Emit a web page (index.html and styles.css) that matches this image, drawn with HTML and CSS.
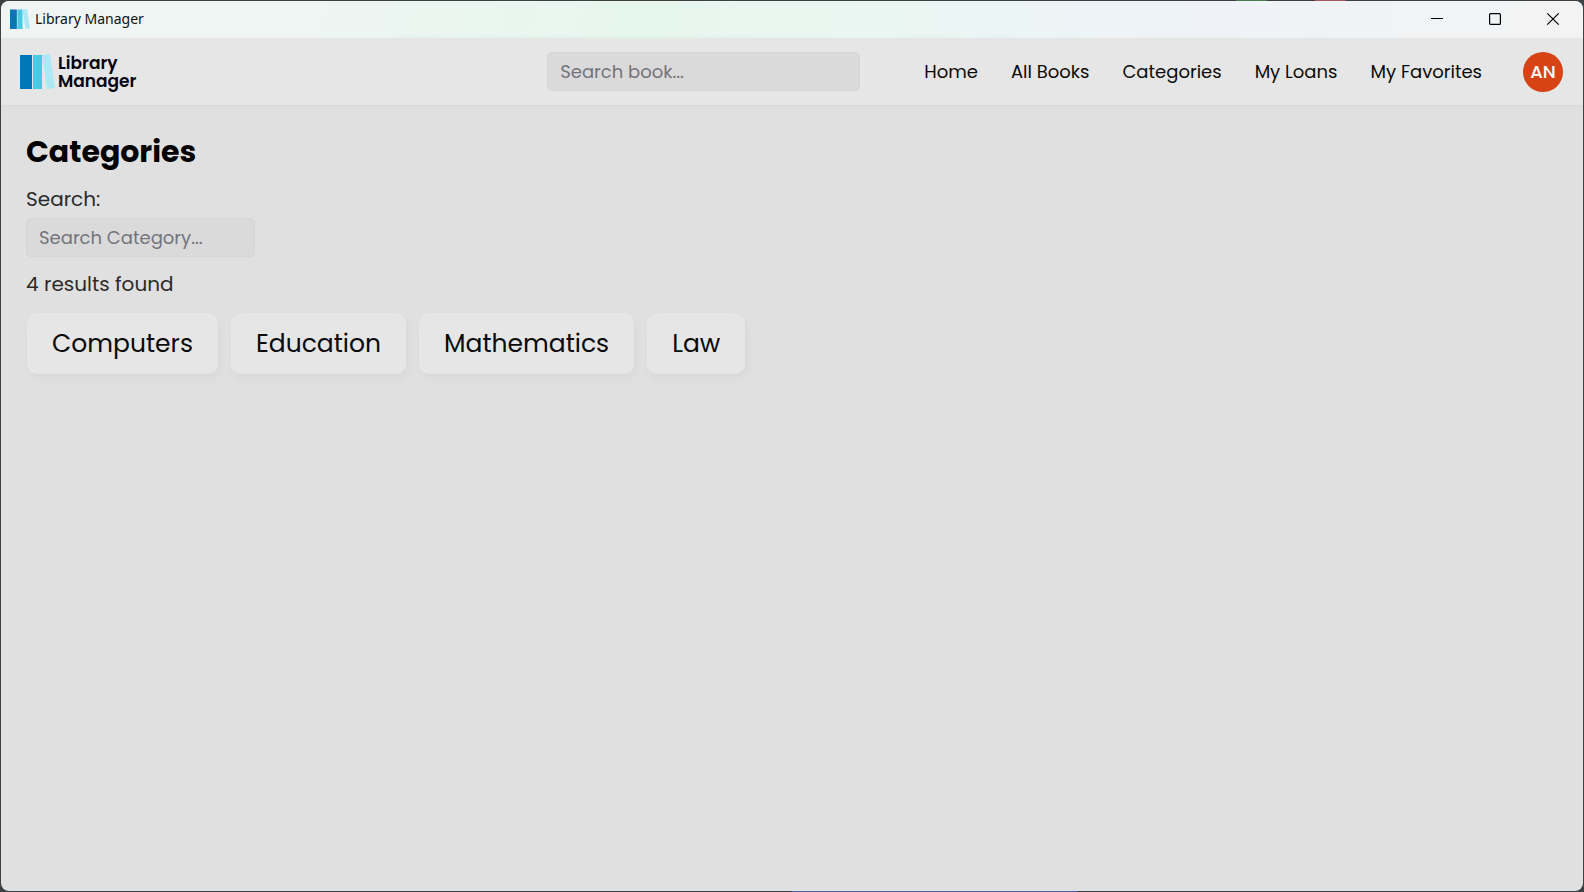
FILE: index.html
```html
<!DOCTYPE html>
<html lang="en">
<head>
<meta charset="utf-8">
<title>Library Manager</title>
<link rel="stylesheet" href="styles.css">
</head>
<body>
<div class="window">
  <div class="titlebar">
    <svg class="app-icon" viewBox="0 0 35 35" aria-hidden="true">
      <path fill="#0077b6" d="M0 1h12v34H0z"/><path fill="#48cae4" d="M13 1h9v34h-9z"/><path fill="#ade8f4" d="M22 1l8-1 5 34-8 1z"/>
    </svg>
    <span class="window-title">Library Manager</span>
    <div class="window-controls">
      <button class="control" aria-label="Minimize"><svg viewBox="0 0 12 12"><path d="M0 5.5h12"/></svg></button>
      <button class="control" aria-label="Maximize"><svg viewBox="0 0 12 12"><rect x=".6" y=".6" width="10.8" height="10.8" rx="1"/></svg></button>
      <button class="control" aria-label="Close"><svg viewBox="0 0 12 12"><path d="M.3.3l11.4 11.4M11.7.3L.3 11.7"/></svg></button>
    </div>
  </div>
  <header class="header">
    <a class="brand" href="#">
      <svg class="brand-icon" viewBox="0 0 35 35" aria-hidden="true">
        <path fill="#0077b6" d="M0 1h12v34H0z"/><path fill="#48cae4" d="M13 1h9v34h-9z"/><path fill="#ade8f4" d="M22 1l8-1 5 34-8 1z"/>
      </svg>
      <span class="brand-name">Library<br>Manager</span>
    </a>
    <input class="field book-search" type="text" placeholder="Search book..." aria-label="Search book">
    <nav class="nav">
      <a href="#">Home</a>
      <a href="#">All Books</a>
      <a href="#">Categories</a>
      <a href="#">My Loans</a>
      <a href="#">My Favorites</a>
    </nav>
    <button class="avatar">AN</button>
  </header>
  <main class="content">
    <h1 class="heading">Categories</h1>
    <label class="label" for="category-search">Search:</label>
    <input class="field category-search" id="category-search" type="text" placeholder="Search Category...">
    <p class="results">4 results found</p>
    <div class="categories">
      <a class="card" href="#">Computers</a>
      <a class="card" href="#">Education</a>
      <a class="card" href="#">Mathematics</a>
      <a class="card" href="#">Law</a>
    </div>
  </main>
</div>
</body>
</html>
```
FILE: styles.css
```css
* { box-sizing: border-box; }

body {
  margin: 0;
  padding: 1px;
  min-height: 100vh;
  display: flex;
  background:
    linear-gradient(90deg, transparent 78%, #4c7a50 78%, #4c7a50 80%, transparent 80%, transparent 83%, #a8595f 83%, #a8595f 85%, transparent 85%) top / 100% 1px no-repeat,
    linear-gradient(90deg, transparent 50%, #4a63a8 50%, #4a63a8 68%, transparent 68%) bottom / 100% 1px no-repeat,
    #3c4043;
  font-family: Poppins, Inter, "Open Sans", sans-serif;
  color: #0a0a0a;
}

a { color: inherit; text-decoration: none; }
button { border: 0; padding: 0; background: none; font-family: inherit; }

.window {
  flex: 1;
  display: flex;
  flex-direction: column;
  overflow: hidden;
  border-radius: 8px;
  background: #e0e0e0;
}

.titlebar {
  display: flex;
  align-items: center;
  height: 37px;
  padding: 0 1px 1px 9px;
  background: linear-gradient(95deg, #f0f5f3 0%, #eef5f2 20%, #e6f7ee 40%, #e9f7f1 52%, #eef3f8 72%, #f3f3f3 100%);
}
.app-icon { width: 20px; height: 20px; }
.window-title {
  margin-left: 5px;
  font: 14px/20px "Noto Sans", sans-serif;
  color: #111;
}
.window-controls { display: flex; margin-left: auto; }
.control {
  display: flex;
  align-items: center;
  justify-content: center;
  width: 58px;
  height: 36px;
}
.control svg { width: 12px; height: 12px; fill: none; stroke: #000; stroke-width: 1.2; overflow: visible; }

.header {
  display: flex;
  align-items: center;
  height: 67px;
  padding: 0 20px 0 19px;
  background: #e6e6e6;
  box-shadow: 0 1px 6px rgba(0, 0, 0, 0.04);
}
.brand { display: flex; align-items: center; gap: 3px; }
.brand-icon { width: 35px; height: 35px; }
.brand-name { font-size: 17px; line-height: 18px; font-weight: 600; color: #03030f; }

.field {
  height: 39px;
  padding: 0 12px;
  border: 1px solid #d5d5d5;
  border-radius: 5px;
  background: #dadada;
  font: 18px/24px Poppins, Inter, sans-serif;
  color: #222;
}
.field::placeholder { color: #73737d; opacity: 1; }
.book-search { width: 20%; min-width: 313px; margin-left: auto; }
.nav { display: flex; gap: 33px; margin-left: 64px; font-size: 18px; line-height: 24px; white-space: nowrap; }
.avatar {
  width: 40px;
  height: 40px;
  margin-left: 41px;
  border-radius: 50%;
  background: #d84315;
  color: #fff;
  font-size: 18px;
  font-weight: 500;
}

.content {
  display: flex;
  flex-direction: column;
  align-items: flex-start;
  padding: 27px 25px;
}
.heading { margin: 0; font-size: 30px; line-height: 40px; font-weight: 700; color: #000; }
.label { margin-top: 12px; font-size: 20px; line-height: 30px; color: #2a2a2a; }
.category-search { width: 229px; margin-top: 4px; }
.results { margin: 12px 0 14px; font-size: 20px; line-height: 30px; color: #2a2a2a; }
.categories { display: flex; flex-wrap: wrap; gap: 13px; padding-left: 1px; }
.card {
  padding: 13px 25px;
  border-radius: 10px;
  background: #e6e6e6;
  box-shadow: 2px 4px 10px rgba(0, 0, 0, 0.04);
  font-size: 25px;
  line-height: 35px;
}
```
